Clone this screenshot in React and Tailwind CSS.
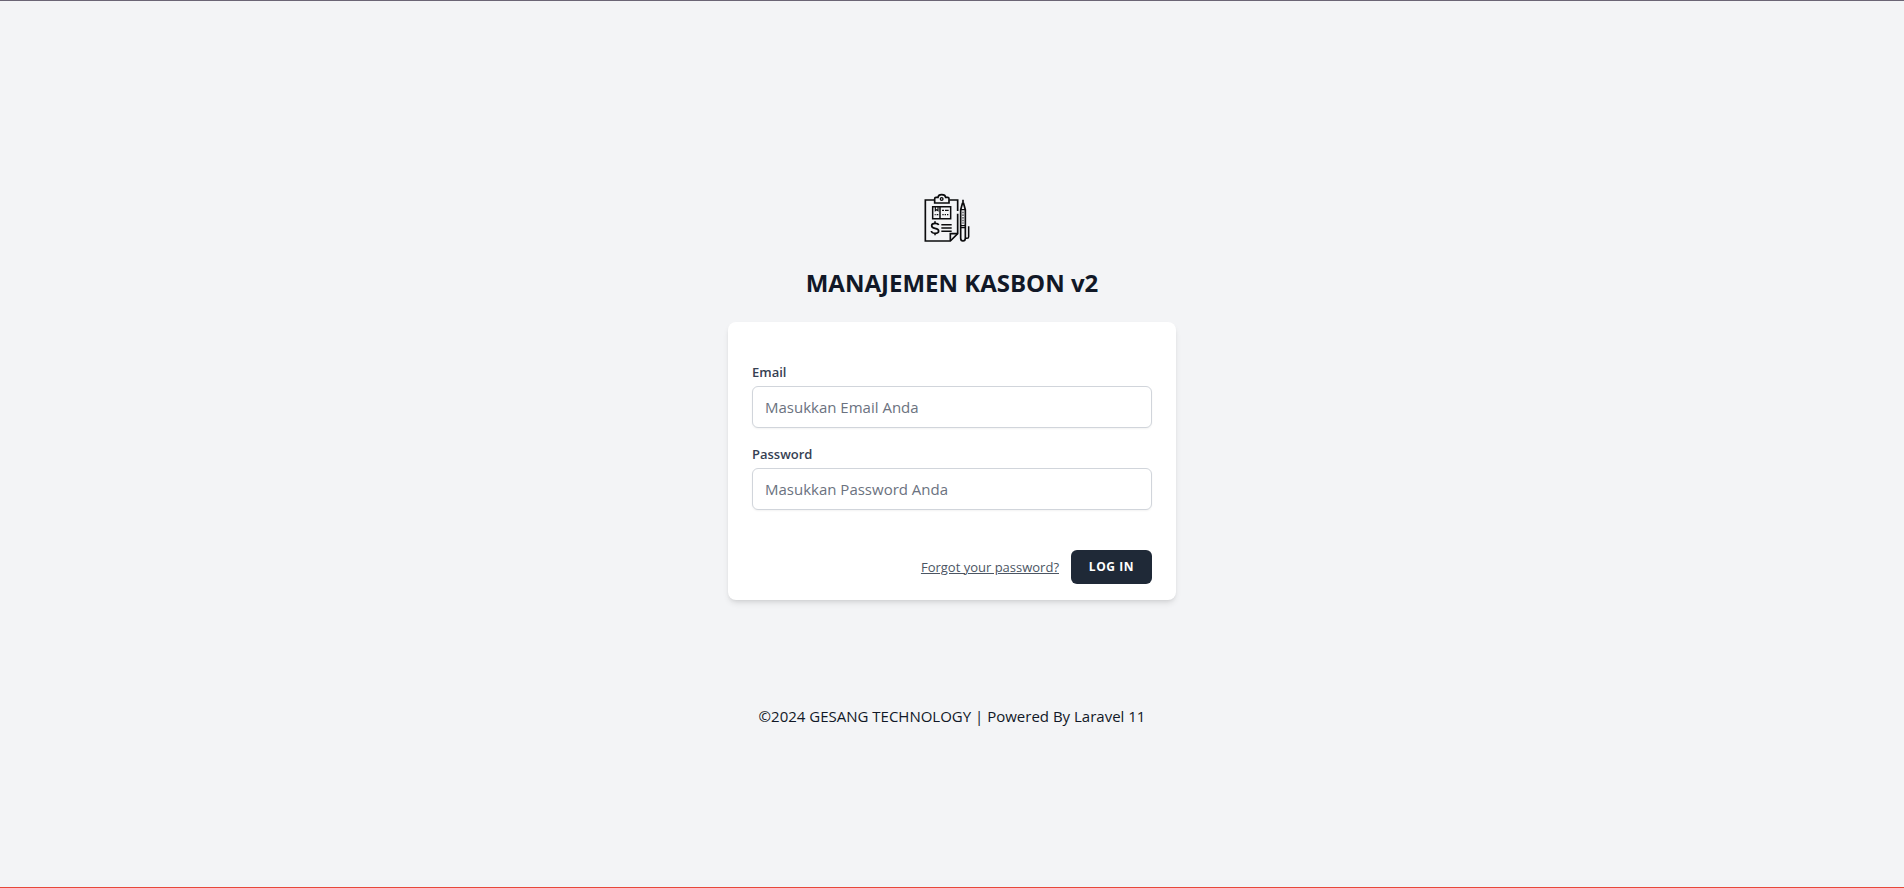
function ClipboardLogo() {
  return (
    <svg
      className="h-[65px] w-[74px]"
      viewBox="0 0 222 195"
      fill="none"
      stroke="#0b0b0d"
      strokeWidth="5"
      role="img"
      aria-label="Manajemen Kasbon"
    >
      <path d="M58 45H31V168H106L128 146V86M128 78V45H103" />
      <path d="M106 167V146H128" />
      <path d="M59 54V41Q59 37 63 37H69Q70 29 80 29Q91 29 92 37H98Q102 37 102 41V54Z" />
      <circle cx="80" cy="42" r="4" strokeWidth="4" />
      <path d="M53 65H107V101H53ZM75 65V101" strokeWidth="4.5" />
      <path d="M61 66V77L65 74L69 77V66" strokeWidth="3.5" />
      <path d="M81 76H87M90 76H101" strokeWidth="4" />
      <path d="M59 89H62M65 89H70M82 89H86M89 89H93M96 89H100" strokeWidth="3.5" />
      <path d="M71 120Q69 115 60 115Q50 115 50 122Q50 128 60 130Q71 132 71 138Q71 145 60 145Q50 145 49 138M60 109V115M60 145V151" />
      <path d="M79 119H110M79 129H110M79 139H110" strokeWidth="4.5" />
      <path d="M137 74L142 56H146L151 74V160Q151 168 144 168Q137 168 137 160Z" />
      <path d="M144 44V58" strokeWidth="5" />
      <path d="M137 74H151M137 122H151M137 128H151" strokeWidth="4" />
      <path d="M144 80V116" strokeWidth="3" strokeDasharray="5 3" />
      <path d="M151 160H156Q161 160 161 155V124" strokeWidth="4.5" />
    </svg>
  );
}

function Field({ id, label, type, placeholder }) {
  return (
    <div className="flex flex-col gap-1">
      <label htmlFor={id} className="self-start text-[13px] leading-5 font-semibold text-gray-700">
        {label}
      </label>
      <input
        id={id}
        name={id}
        type={type}
        placeholder={placeholder}
        className="h-[42px] w-full rounded-md border border-[#d1d5db] bg-white px-3 text-[15px] leading-6 text-gray-900 shadow-xs placeholder:text-[#6b7280]"
      />
    </div>
  );
}

export default function App() {
  return (
    <div className="flex min-h-screen flex-col items-center justify-center border-t border-b border-t-[#6b6575] border-b-[#e8483a] bg-[#f3f4f6] pt-6 font-['Open_Sans','Noto_Sans',sans-serif] text-[#111827]">
      <ClipboardLogo />
      <h1 className="mt-4 text-2xl leading-[34px] font-bold">MANAJEMEN KASBON v2</h1>

      <main className="mt-[22px] w-full max-w-md rounded-lg bg-white px-6 pt-10 pb-4 shadow-md">
        <form onSubmit={(event) => event.preventDefault()}>
          <div className="flex flex-col gap-4">
            <Field id="email" label="Email" type="email" placeholder="Masukkan Email Anda" />
            <Field id="password" label="Password" type="password" placeholder="Masukkan Password Anda" />
          </div>
          <div className="mt-10 flex items-center justify-end gap-3">
            <a href="#" className="text-[13px] leading-5 text-[#4b5563] underline">
              Forgot your password?
            </a>
            <button
              type="submit"
              className="h-[34px] w-[81px] rounded-md bg-[#1f2937] text-xs font-bold tracking-wider text-white uppercase"
            >
              Log in
            </button>
          </div>
        </form>
      </main>

      <footer className="mt-26 text-[15px] leading-6">©2024 GESANG TECHNOLOGY | Powered By Laravel 11</footer>
    </div>
  );
}
